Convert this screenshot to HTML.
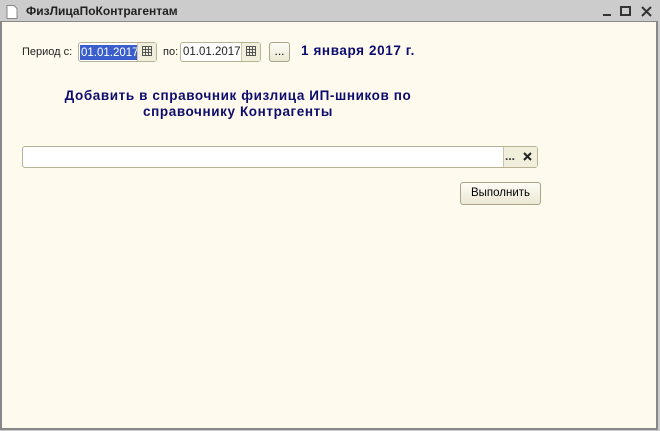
<!DOCTYPE html>
<html><head><meta charset="utf-8"><style>
*{margin:0;padding:0;box-sizing:border-box}
body{width:660px;height:431px;background:#ccc;font-family:"Liberation Sans",sans-serif;position:relative;overflow:hidden}
.a{position:absolute;white-space:nowrap}
.f{background:#fff;border:1px solid #b8b395;border-radius:3px}
.btn{background:linear-gradient(#fdfcf5,#ece8d4);border:1px solid #a9a48a;border-radius:3px;font-size:12px;text-align:center}
.t{font-size:11px;color:#222}
.nv{color:#0c0c6e;font-weight:bold;font-size:13px;letter-spacing:0.6px}
</style></head><body>
<div class="a" style="left:0;top:0;width:660px;height:21px;background:#ccc"></div>
<svg class="a" style="left:6px;top:5px" width="12" height="14"><path d="M1 .5h7l3 3v10H1z" fill="#fff" stroke="#888"/></svg>
<div class="a" style="left:26px;top:4px;font-size:12px;font-weight:bold;color:#222;letter-spacing:0px">ФизЛицаПоКонтрагентам</div>
<div class="a" style="left:603px;top:14px;width:8px;height:2px;background:#333"></div>
<div class="a" style="left:620px;top:6px;width:11px;height:10px;border:2px solid #333;border-top-width:2px"></div>
<svg class="a" style="left:641px;top:6px" width="11" height="11"><path d="M1 1L10 10M10 1L1 10" stroke="#333" stroke-width="2"/></svg>
<div class="a" style="left:0;top:21px;width:658px;height:409px;background:#fffaee;border:2px solid #888;border-top:1px solid #888"></div>
<div class="a t" style="left:22px;top:46px">Период с:</div>
<div class="a f" style="left:78px;top:42px;width:79px;height:20px"></div>
<div class="a" style="left:80px;top:45px;background:#3a5fcd;color:#fff;font-size:11.5px;padding:1px 1px 0;line-height:14px">01.01.2017</div>
<div class="a" style="left:137px;top:43px;width:19px;height:18px;background:#f2eedc;border-left:1px solid #ccc6a8"></div>
<svg class="a" style="left:142px;top:46px" width="10" height="10"><path d="M.5 .5h9v9h-9zM.5 3.5h9M.5 6.5h9M3.5 .5v9M6.5 .5v9" stroke="#555" fill="none"/></svg>
<div class="a t" style="left:163px;top:46px">по:</div>
<div class="a f" style="left:180px;top:42px;width:81px;height:20px"></div>
<div class="a" style="left:183px;top:46px;font-size:11.5px;color:#222">01.01.2017</div>
<div class="a" style="left:241px;top:43px;width:19px;height:18px;background:#f2eedc;border-left:1px solid #ccc6a8"></div>
<svg class="a" style="left:246px;top:46px" width="10" height="10"><path d="M.5 .5h9v9h-9zM.5 3.5h9M.5 6.5h9M3.5 .5v9M6.5 .5v9" stroke="#555" fill="none"/></svg>
<div class="a btn" style="left:269px;top:42px;width:21px;height:20px;line-height:16px">...</div>
<div class="a nv" style="left:301px;top:43px;font-size:13.5px">1 января 2017 г.</div>
<div class="a nv" style="left:20px;top:88px;width:436px;text-align:center;line-height:16px;font-size:13.5px">Добавить в справочник физлица ИП-шников по<br>справочнику Контрагенты</div>
<div class="a f" style="left:22px;top:146px;width:516px;height:22px"></div>
<div class="a" style="left:503px;top:147px;width:34px;height:20px;background:#f2eedc;border-left:1px solid #ccc6a8"></div>
<div class="a" style="left:505px;top:149px;font-size:12px;font-weight:bold;color:#333">...</div>
<svg class="a" style="left:523px;top:152px" width="9" height="9"><path d="M1 1L8 8M8 1L1 8" stroke="#222" stroke-width="2"/></svg>
<div class="a btn" style="left:460px;top:182px;width:81px;height:23px;line-height:21px;font-size:11.5px">Выполнить</div>
</body></html>
